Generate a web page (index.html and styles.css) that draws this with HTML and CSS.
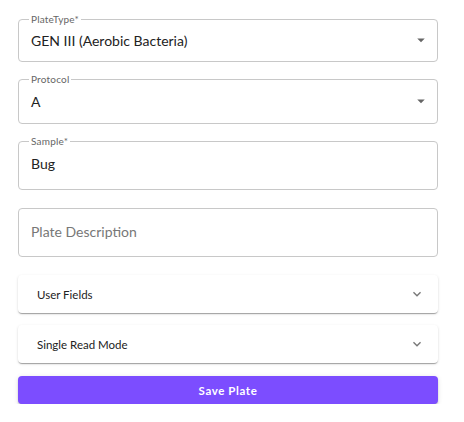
FILE: index.html
```html
<!DOCTYPE html>
<html lang="en">

<head>
     <meta charset="UTF-8">
     <title>New Plate</title>
     <link rel="stylesheet" href="styles.css">
</head>

<body>
     <form class="plate-form">
          <fieldset class="field">
               <legend>PlateType*</legend>
               <div class="row short">
                    <span class="value">GEN III (Aerobic Bacteria)</span>
                    <svg class="arrow" viewBox="0 0 24 24"><path d="M7 10l5 5 5-5z" /></svg>
               </div>
          </fieldset>

          <fieldset class="field">
               <legend>Protocol</legend>
               <div class="row">
                    <span class="value">A</span>
                    <svg class="arrow" viewBox="0 0 24 24"><path d="M7 10l5 5 5-5z" /></svg>
               </div>
          </fieldset>

          <fieldset class="field tall">
               <legend>Sample*</legend>
               <div class="row">
                    <span class="value">Bug</span>
               </div>
          </fieldset>

          <div class="field plain">
               <div class="row">
                    <span class="value placeholder">Plate Description</span>
               </div>
          </div>

          <div class="panel">
               <span>User Fields</span>
               <svg class="chevron" viewBox="0 0 24 24"><path d="M16.59 8.59L12 13.17 7.41 8.59 6 10l6 6 6-6z" /></svg>
          </div>

          <div class="panel">
               <span>Single Read Mode</span>
               <svg class="chevron" viewBox="0 0 24 24"><path d="M16.59 8.59L12 13.17 7.41 8.59 6 10l6 6 6-6z" /></svg>
          </div>

          <button type="button" class="save">Save Plate</button>
     </form>
</body>

</html>
```

FILE: styles.css
```css
* {
     margin: 0;
     padding: 0;
     box-sizing: border-box;
}

body {
     background: #fff;
     font-family: Lato, "Liberation Sans", sans-serif;
     color: #222;
}

.plate-form {
     width: 420px;
     margin: 14px 0 0 18px;
     display: flex;
     flex-direction: column;
}

.field {
     border: 1px solid #c8c8c8;
     border-radius: 4px;
     padding: 0 12px 5px;
     margin-bottom: 12px;
}

.field legend {
     font-size: 10px;
     line-height: 10px;
     color: #666;
     padding: 0 2px;
     margin-left: -2px;
     letter-spacing: .2px;
}

.row {
     height: 34px;
     display: flex;
     align-items: center;
}

.row.short {
     height: 32px;
}

.field.tall {
     padding-bottom: 9px;
     margin-bottom: 18px;
}

.field.plain {
     padding: 0 12px 2px;
     margin-bottom: 18px;
}

.plain .row {
     height: 45px;
}

.value {
     flex: 1;
     font-size: 14px;
     color: #222;
}

.placeholder {
     color: #777;
}

.arrow {
     width: 18px;
     height: 18px;
     fill: #666;
     margin-right: -5px;
}

.panel {
     height: 38px;
     border-radius: 4px;
     background: #fff;
     box-shadow: 0 2px 1px -1px rgba(0, 0, 0, .2), 0 1px 1px 0 rgba(0, 0, 0, .14), 0 1px 3px 0 rgba(0, 0, 0, .12);
     display: flex;
     align-items: center;
     justify-content: space-between;
     padding: 0 13px 0 19px;
     margin-bottom: 12px;
     font-size: 11.5px;
     color: #222;
}

.panel + .panel {
     margin-bottom: 13px;
}

.chevron {
     width: 16px;
     height: 16px;
     fill: #777;
}

.save {
     height: 28px;
     border: none;
     border-radius: 4px;
     background: #7c4dff;
     color: #fff;
     font-family: Lato, "Liberation Sans", sans-serif;
     font-size: 11.5px;
     font-weight: 700;
     letter-spacing: .6px;
     box-shadow: 0 3px 1px -2px rgba(0, 0, 0, .2), 0 2px 2px 0 rgba(0, 0, 0, .14), 0 1px 5px 0 rgba(0, 0, 0, .12);
}
```
